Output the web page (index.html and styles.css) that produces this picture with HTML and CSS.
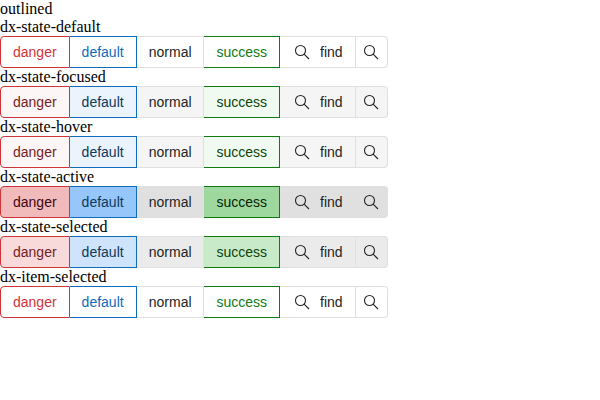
FILE: index.html
```
<!DOCTYPE html>
<html lang="en">
<head>
<meta charset="utf-8">
<title>Button group states</title>
<link rel="stylesheet" href="styles.css">
</head>
<body>
<div>outlined</div>
<div id="groups"></div>
<template id="group">
<div class="group">
<div class="button danger">danger</div>
<div class="button default">default</div>
<div class="button normal">normal</div>
<div class="button success">success</div>
<div class="button normal find"><svg class="icon" viewBox="0 0 18 18"><circle cx="7.5" cy="7.5" r="5"/><path d="M11.1 11.1L16 16"/></svg><span>find</span></div>
<div class="button normal search"><svg class="icon" viewBox="0 0 18 18"><circle cx="7.5" cy="7.5" r="5"/><path d="M11.1 11.1L16 16"/></svg></div>
</div>
</template>
<script src="script.js"></script>
</body>
</html>
```
FILE: styles.css
```
body {
  margin: 0;
  background: #fff;
  color: #000;
  font: 16px/18px "Liberation Serif", serif;
}

.group {
  display: flex;
  width: 388px;
  height: 32px;
}

.button {
  box-sizing: border-box;
  display: flex;
  flex: none;
  align-items: center;
  height: 32px;
  padding-left: 12px;
  border: 1px solid #e0e0e0;
  border-left: 0;
  color: #242424;
  font: 14px/20px "Liberation Sans", sans-serif;
}

.danger {
  width: 70px;
  border: 1px solid #d13438;
  border-radius: 4px 0 0 4px;
  color: #d13438;
}

.default {
  width: 67px;
  padding-left: 11.6px;
  border-color: #0f6cbd;
  color: #0f6cbd;
}

.normal {
  width: 67px;
  padding-left: 11.8px;
}

.success {
  width: 76px;
  padding-left: 12.5px;
  border-color: #107c10;
  color: #107c10;
}

.find {
  width: 76px;
  gap: 9px;
  padding-left: 13px;
}

.search {
  width: 32px;
  padding-left: 6px;
  border-radius: 0 4px 4px 0;
}

.icon {
  width: 18px;
  height: 18px;
  fill: none;
  stroke: #242424;
  stroke-width: 1.1;
}

.focused .danger, .hover .danger { background: #fdf6f6; color: #751d1f; }
.focused .default, .hover .default { background: #ebf3fc; color: #0c3b5e; }
.focused .normal, .hover .normal { background: #f5f5f5; }
.focused .success, .hover .success { background: #f1faf1; color: #094509; }

.active .danger { background: #f1bbbc; color: #420610; }
.active .default { background: #96c6fa; color: #0c3b5e; }
.active .normal { background: #e0e0e0; }
.active .success { background: #9fd89f; color: #052505; }

.selected .danger { background: #f8dadb; color: #751d1f; }
.selected .default { background: #cfe4fa; color: #0c3b5e; }
.selected .normal { background: #ebebeb; }
.selected .success { background: #c9eac9; color: #094509; }
```
FILE: script.js
```
const template = document.getElementById("group");
const root = document.getElementById("groups");
const states = [
  ["dx-state-default", "initial"],
  ["dx-state-focused", "focused"],
  ["dx-state-hover", "hover"],
  ["dx-state-active", "active"],
  ["dx-state-selected", "selected"],
  ["dx-item-selected", "item"]
];
for (const [label, name] of states) {
  const section = document.createElement("section");
  section.className = name;
  const title = document.createElement("div");
  title.textContent = label;
  section.append(title, template.content.cloneNode(true));
  root.append(section);
}
```
